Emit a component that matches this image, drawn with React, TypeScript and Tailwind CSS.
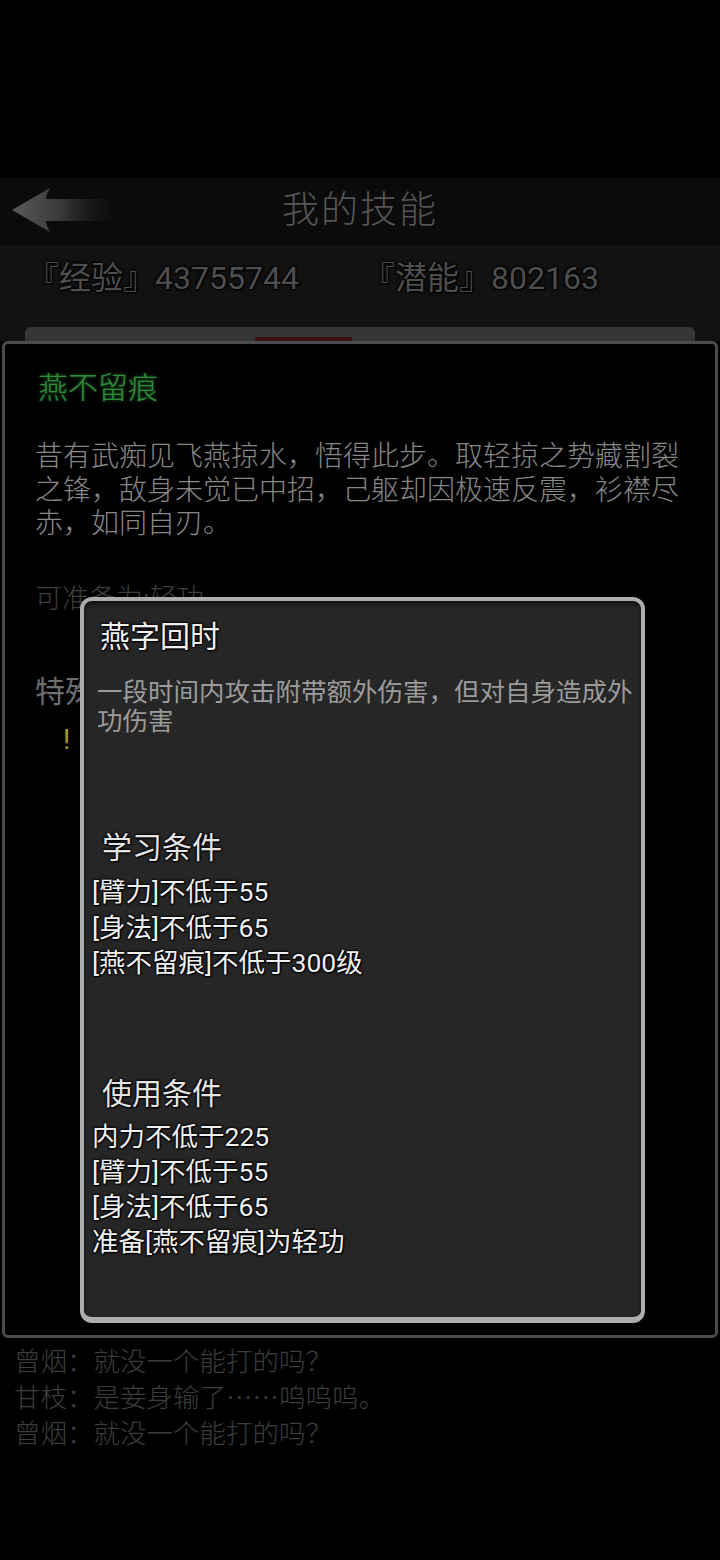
import React from "react";

const outline =
  "[text-shadow:0_0_2px_#000,0_0_2px_#000,0_0_3px_#000,1px_1px_1px_#000]";

function BackArrow() {
  return (
    <svg width="110" height="50" viewBox="0 0 110 50">
      <defs>
        <linearGradient id="ag" x1="0" y1="0" x2="1" y2="0">
          <stop offset="0" stopColor="#5a5a5a" />
          <stop offset="0.45" stopColor="#3a3a3a" />
          <stop offset="1" stopColor="#1a1a1a" stopOpacity="0" />
        </linearGradient>
      </defs>
      <path
        d="M2 25 L40 3 Q36 10 36 14 L108 14 L108 36 L36 36 Q36 40 40 47 Z"
        fill="url(#ag)"
      />
    </svg>
  );
}

export default function App() {
  return (
    <div className="w-[720px] h-[1560px] bg-black overflow-hidden font-['Roboto','Noto_Sans_CJK_SC',sans-serif]">
      <div className="h-[178px]" />
      {/* header */}
      <div className="relative h-[67px] bg-[#0b0b0b] flex items-center justify-center pb-[8px]">
        <div className="absolute left-[10px] top-[7px]">
          <BackArrow />
        </div>
        <div className="text-[37px] leading-none tracking-[2px] text-[#555555] font-light font-['Noto_Sans_CJK_SC',sans-serif]">
          我的技能
        </div>
      </div>
      {/* stats */}
      <div className="bg-[#121212] h-[96px] flex flex-col">
        <div className={`h-[82px] flex items-center pb-[16px] text-[32px] text-[#4e4e4e] ${outline}`}>
          <div className="pl-[27px] w-[363px]">『经验』43755744</div>
          <div>『潜能』802163</div>
        </div>
        <div className="mx-[25px] h-[14px] rounded-t-[6px] bg-[#363636] flex">
          <div className="ml-[230px] mt-[10px] w-[97px] h-[4px] bg-[#3a1414]" />
        </div>
      </div>
      {/* main panel */}
      <div className="relative mx-[2px] h-[997px] border-[3px] border-[#4b4b4b] rounded-[6px] bg-black">
        <div className="pl-[30px] pt-[23px]">
          <div className="pl-[3px] text-[30px] leading-[36px] text-[#2f8c3c] font-light font-['Noto_Sans_CJK_SC',sans-serif] [text-shadow:0_0_4px_#1c4a20,0_0_2px_#1c4a20]">
            燕不留痕
          </div>
          <div className="mt-[35px] text-[28px] leading-[33.5px] text-[#878787] font-light font-['Noto_Sans_CJK_SC',sans-serif]">
            <div>昔有武痴见飞燕掠水，悟得此步。取轻掠之势藏割裂</div>
            <div>之锋，敌身未觉已中招，己躯却因极速反震，衫襟尽</div>
            <div>赤，如同自刃。</div>
          </div>
          <div className="mt-[41px] text-[27px] leading-[34px] text-[#3e3e3e] font-light font-['Noto_Sans_CJK_SC',sans-serif]">
            可准备为:轻功
          </div>
          <div className={`mt-[60px] text-[30px] leading-[36px] text-[#6e6e6e] ${outline}`}>
            特殊效果
          </div>
          <div className="mt-[12px] pl-[28px] text-[28px] leading-[36px] text-[#a89c1c]">
            !
          </div>
        </div>

        {/* popup */}
        <div className="absolute left-[75px] top-[253px] w-[565px] h-[726px] rounded-[12px] border-[4px] border-b-[6px] border-[#adadad] bg-[#262626] shadow-[inset_0_3px_4px_rgba(0,0,0,0.6)]">
          <div className="pt-[18px]">
            <div className={`pl-[16px] text-[30px] leading-[36px] text-[#f0f0f0] ${outline}`}>
              燕字回时
            </div>
            <div className="mt-[23px] pl-[13px] pr-[4px] text-[25.5px] leading-[29px] text-[#9b9b9b]">
              <div>一段时间内攻击附带额外伤害，但对自身造成外</div>
              <div>功伤害</div>
            </div>
            <div className={`mt-[94px] pl-[18px] text-[30px] leading-[36px] text-[#e4e4e4] ${outline}`}>
              学习条件
            </div>
            <div className={`mt-[8px] pl-[8px] text-[26.5px] leading-[35.5px] text-[#f0f0f0] ${outline}`}>
              <div>[臂力]不低于55</div>
              <div>[身法]不低于65</div>
              <div>[燕不留痕]不低于300级</div>
            </div>
            <div className={`mt-[95px] pl-[18px] text-[30px] leading-[36px] text-[#e4e4e4] ${outline}`}>
              使用条件
            </div>
            <div className={`mt-[7px] pl-[8px] text-[26.5px] leading-[35.3px] text-[#f0f0f0] ${outline}`}>
              <div>内力不低于225</div>
              <div>[臂力]不低于55</div>
              <div>[身法]不低于65</div>
              <div>准备[燕不留痕]为轻功</div>
            </div>
          </div>
        </div>
      </div>
      {/* chat */}
      <div className="pt-[4px] pl-[14px] text-[26.5px] leading-[36px] text-[#3b3e3e] font-light font-['Noto_Sans_CJK_SC',sans-serif]">
        <div>曾烟：就没一个能打的吗？</div>
        <div>甘枝：是妾身输了……呜呜呜。</div>
        <div>曾烟：就没一个能打的吗？</div>
      </div>
    </div>
  );
}
